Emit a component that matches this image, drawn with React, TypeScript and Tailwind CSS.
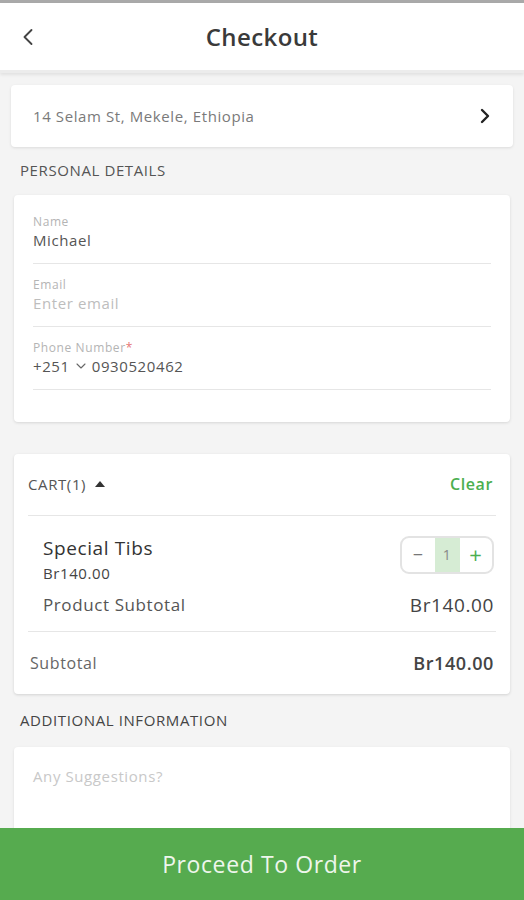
import { ChevronLeft, ChevronRight, ChevronDown } from "lucide-react";

const font = { fontFamily: '"Open Sans", "Liberation Sans", sans-serif' };

function Field({ label, value, placeholder }: { label: string; value?: string; placeholder?: string }) {
  return (
    <div className="border-b border-[#e6e6e6] pt-[14px] pb-[12px]">
      <div className="text-[12px] leading-[14px] text-[#b4b4b4]">{label}</div>
      <div className={`text-[15px] leading-[22px] ${value ? "text-[#555]" : "text-[#bdbdbd]"}`}>
        {value ?? placeholder}
      </div>
    </div>
  );
}

export default function App() {
  return (
    <div className="relative w-[524px] h-[900px] overflow-hidden bg-[#f4f4f4] tracking-[0.6px]" style={font}>
      <div className="h-[3px] bg-[#a9a9a9]" />
      <header className="relative h-[70px] bg-white flex items-center justify-center shadow-[0_2px_3px_rgba(0,0,0,0.08)] border-b-[3px] border-[#ececec]">
        <ChevronLeft className="absolute left-[14px] h-7 w-7 text-[#444]" strokeWidth={1.6} />
        <h1 className="text-[24px] font-semibold text-[#3a3a3a] tracking-[0.4px]">Checkout</h1>
      </header>

      <main className="px-[11px] pt-[12px]">
        <div className="h-[62px] bg-white rounded-[4px] shadow-[0_1px_3px_rgba(0,0,0,0.1)] flex items-center justify-between pl-[22px] pr-[16px]">
          <span className="text-[15px] text-[#7a7a7a]">14 Selam St, Mekele, Ethiopia</span>
          <ChevronRight className="h-6 w-6 text-[#222]" strokeWidth={2.4} />
        </div>

        <div className="pl-[9px] pt-[12px] pb-[13px] text-[15px] text-[#555]">PERSONAL DETAILS</div>

        <div className="mx-[3px] bg-white rounded-[4px] shadow-[0_1px_3px_rgba(0,0,0,0.12)] px-[19px] pt-[6px] pb-[32px]">
          <Field label="Name" value="Michael" />
          <Field label="Email" placeholder="Enter email" />
          <div className="border-b border-[#e6e6e6] pt-[14px] pb-[12px]">
            <div className="text-[12px] leading-[14px] text-[#b4b4b4]">
              Phone Number<span className="text-[#e57373]">*</span>
            </div>
            <div className="flex items-center text-[15px] leading-[22px] text-[#555]">
              +251
              <ChevronDown className="h-4 w-4 mx-[3px] text-[#666]" strokeWidth={1.6} />
              0930520462
            </div>
          </div>
        </div>

        <div className="mx-[3px] mt-[32px] bg-white rounded-[4px] shadow-[0_1px_3px_rgba(0,0,0,0.14)] px-[14px]">
          <div className="h-[62px] flex items-center justify-between border-b border-[#e6e6e6]">
            <div className="flex items-center gap-[9px] text-[15px] text-[#555]">
              CART(1)
              <svg width="10" height="6" viewBox="0 0 10 6"><path d="M0 6 L5 0 L10 6 Z" fill="#333" /></svg>
            </div>
            <span className="text-[16px] font-semibold text-[#4caf50] pr-[3px]">Clear</span>
          </div>
          <div className="border-b border-[#e6e6e6] pl-[15px] pr-[2px] pt-[19px] pb-[12px]">
            <div className="flex justify-between items-start">
              <div>
                <div className="text-[19px] leading-[26px] text-[#333]">Special Tibs</div>
                <div className="text-[15px] leading-[24px] text-[#444]">Br140.00</div>
              </div>
              <div className="mt-[1px] flex items-stretch h-[38px] w-[94px] rounded-[9px] border-2 border-[#e3e3e3] overflow-hidden">
                <span className="flex-1 flex items-center justify-center text-[#777] text-[18px]">−</span>
                <span className="w-[25px] flex items-center justify-center bg-[#d6ecd4] text-[#888] text-[14px]">1</span>
                <span className="flex-1 flex items-center justify-center text-[#4caf50] text-[22px]">+</span>
              </div>
            </div>
            <div className="flex justify-between items-center mt-[6px]">
              <span className="text-[17px] text-[#555]">Product Subtotal</span>
              <span className="text-[19px] text-[#444]">Br140.00</span>
            </div>
          </div>
          <div className="h-[62px] flex items-center justify-between pl-[2px] pr-[2px]">
            <span className="text-[16px] text-[#666]">Subtotal</span>
            <span className="text-[18px] font-semibold text-[#444]">Br140.00</span>
          </div>
        </div>

        <div className="pl-[9px] pt-[15px] pb-[15px] text-[15px] text-[#444]">ADDITIONAL INFORMATION</div>

        <div className="mx-[3px] h-[120px] bg-white rounded-[4px] shadow-[0_1px_3px_rgba(0,0,0,0.1)] px-[19px] pt-[17px]">
          <span className="text-[15px] text-[#c8c8c8]">Any Suggestions?</span>
        </div>
      </main>

      <button className="absolute left-0 right-0 bottom-0 h-[72px] bg-[#56ab4f] text-[#eef6ec] text-[23px] flex items-center justify-center">
        Proceed To Order
      </button>
    </div>
  );
}
